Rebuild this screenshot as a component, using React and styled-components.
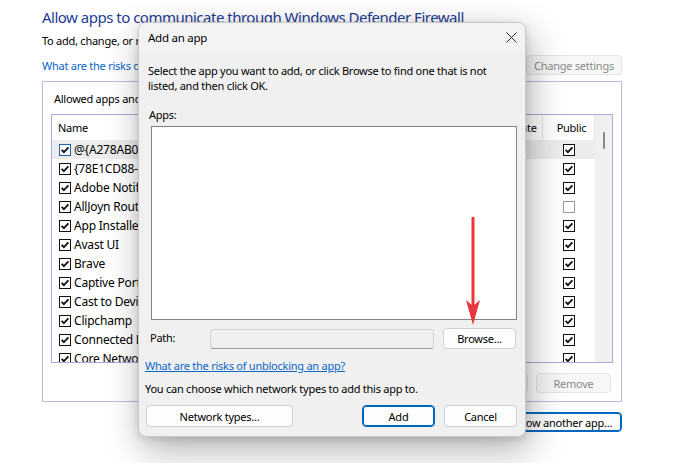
import React from 'react'
import styled, { createGlobalStyle } from 'styled-components'

const Global = createGlobalStyle`
  html, body {
    margin: 0;
    padding: 0;
    background: #ffffff;
    width: 696px;
    height: 463px;
    overflow: hidden;
  }
  body {
    font-family: 'Noto Sans', 'Open Sans', sans-serif;
    font-size: 11px;
    letter-spacing: -0.25px;
    color: #000;
  }
`

const Page = styled.div`
  position: relative;
  width: 696px;
  height: 463px;
  overflow: hidden;
  padding: 7px 0 0 42px;
  box-sizing: border-box;
`

const Main = styled.div`
  width: 580px;
  display: flex;
  flex-direction: column;
`

const Title = styled.div`
  font-size: 15px;
  letter-spacing: -0.5px;
  line-height: 20px;
  color: #1e3c96;
  white-space: nowrap;
`

const Intro = styled.div`
  margin-top: 5px;
  line-height: 18px;
  white-space: nowrap;
`

const LinkRow = styled.div`
  margin-top: 3px;
  height: 24px;
  display: flex;
  align-items: center;
  justify-content: space-between;
`

const BlueLink = styled.a`
  color: #0a66c8;
  text-decoration: ${p => (p.$underline ? 'underline' : 'none')};
  white-space: nowrap;
  cursor: pointer;
`

const Button = styled.button`
  font: inherit;
  letter-spacing: inherit;
  height: ${p => p.$h || 21}px;
  width: ${p => p.$w}px;
  padding: 0;
  margin-right: ${p => p.$mr || 0}px;
  background: ${p => (p.$disabled ? '#f7f7f7' : '#fdfdfd')};
  color: ${p => (p.$disabled ? '#8a8a8a' : '#000')};
  border: 1px solid ${p => (p.$primary ? '#0067c0' : p.$disabled ? '#e5e5e5' : '#d0d0d0')};
  border-radius: 4px;
  box-shadow: ${p => (p.$primary ? 'inset 0 0 0 1px #0067c0' : 'none')};
  white-space: nowrap;
`

const Group = styled.div`
  margin-top: 4px;
  height: 321px;
  border: 1px solid #b9bae0;
  box-sizing: border-box;
  padding: 9px 8px 0 8px;
  display: flex;
  flex-direction: column;
`

const GroupLabel = styled.div`
  line-height: 16px;
  padding-left: 3px;
  white-space: nowrap;
`

const ListBox = styled.div`
  margin-top: 7px;
  height: 249px;
  border: 1px solid #a9aadb;
  box-sizing: border-box;
  display: flex;
  overflow: hidden;
`

const Table = styled.div`
  flex: 1;
  display: flex;
  flex-direction: column;
`

const HeadRow = styled.div`
  height: 25px;
  display: grid;
  grid-template-columns: 1fr 52px 52px;
  align-items: center;
  flex-shrink: 0;
`

const HeadCell = styled.div`
  padding-left: 6px;
  height: 100%;
  display: flex;
  align-items: center;
  justify-content: ${p => (p.$center ? 'center' : 'flex-start')};
  border-right: ${p => (p.$sep ? '1px solid #e3e3e3' : 'none')};
  white-space: nowrap;
`

const Row = styled.div`
  height: 19px;
  display: grid;
  grid-template-columns: 1fr 52px 52px;
  align-items: center;
  background: ${p => (p.$selected ? '#ececec' : 'transparent')};
  flex-shrink: 0;
`

const NameCell = styled.div`
  display: flex;
  align-items: center;
  gap: 3px;
  padding-left: 7px;
  white-space: nowrap;
  font-size: 12px;
  letter-spacing: -0.2px;
`

const CenterCell = styled.div`
  display: flex;
  justify-content: center;
`

const Scroll = styled.div`
  width: 17px;
  background: #f0f0f0;
  display: flex;
  justify-content: center;
  padding-top: 17px;
  box-sizing: border-box;
`

const Thumb = styled.div`
  width: 2px;
  height: 17px;
  background: #8a8a8a;
  border-radius: 1px;
`

const GroupButtons = styled.div`
  margin-top: 10px;
  display: flex;
  justify-content: flex-end;
  gap: 8px;
  padding-right: 2px;
`

const BottomRow = styled.div`
  margin-top: 10px;
  display: flex;
  justify-content: flex-end;
`

const Dialog = styled.div`
  position: absolute;
  left: 138px;
  top: 22px;
  width: 388px;
  height: 415px;
  background: #f0f0f0;
  border: 1px solid #c8c8c8;
  box-sizing: border-box;
  border-radius: 8px;
  box-shadow: 4px 12px 36px rgba(0, 0, 0, 0.32), 0 2px 8px rgba(0, 0, 0, 0.12);
  display: flex;
  flex-direction: column;
  overflow: hidden;
`

const TitleBar = styled.div`
  height: 29px;
  background: #f3f3f3;
  display: flex;
  align-items: center;
  justify-content: space-between;
  padding: 0 8px 0 9px;
  flex-shrink: 0;
  font-size: 11.5px;
`

const DialogBody = styled.div`
  padding: 10px 9px 0 9px;
  display: flex;
  flex-direction: column;
`

const Text = styled.div`
  line-height: 15px;
  margin-top: ${p => p.$mt || 0}px;
  margin-left: ${p => p.$ml || 0}px;
  white-space: nowrap;
`

const AppsList = styled.div`
  margin: 4px 0 0 3px;
  width: 366px;
  height: 194px;
  background: #fff;
  border: 1px solid #848484;
  box-sizing: border-box;
`

const PathRow = styled.div`
  margin-top: 8px;
  display: flex;
  align-items: center;
  padding-left: 2px;
`

const PathLabel = styled.div`
  width: 60px;
  margin-top: -2px;
`

const PathInput = styled.div`
  width: 224px;
  height: 20px;
  box-sizing: border-box;
  background: #efefef;
  border: 1px solid #d4d4d4;
  border-bottom-color: #9a9a9a;
  border-radius: 3px;
  margin-right: 9px;
`

const DialogButtons = styled.div`
  margin: 9px 0 0 -2px;
  display: flex;
  align-items: center;
`

const Spacer = styled.div`
  flex: 1;
`

const ArrowLayer = styled.svg`
  position: absolute;
  left: 463px;
  top: 214px;
  overflow: visible;
`

function Check({ on = true, focus }) {
  return (
    <svg width="12" height="12" viewBox="0 0 12 12">
      <rect
        x="0.5"
        y="0.5"
        width="11"
        height="11"
        fill="#fff"
        stroke={focus ? '#1f5fb0' : on ? '#111' : '#9a9a9a'}
      />
      {on && (
        <path d="M2.6 5.8 L4.9 8.2 L9.4 3.4" fill="none" stroke="#111" strokeWidth="1.8" />
      )}
    </svg>
  )
}

const apps = [
  ['@{A278AB0D-A9B6-4B4E-9EE3-4E6C1BAF1E23}', true],
  ['{78E1CD88-49E3-476E-B926-580E596AD309}', true],
  ['Adobe Notification Client', true],
  ['AllJoyn Router', false],
  ['App Installer', true],
  ['Avast UI', true],
  ['Brave', true],
  ['Captive Portal Flow', true],
  ['Cast to Device functionality', true],
  ['Clipchamp', true],
  ['Connected Devices Platform', true],
  ['Core Networking', true],
]

export default function App() {
  return (
    <Page>
      <Global />
      <Main>
        <Title>Allow apps to communicate through Windows Defender Firewall</Title>
        <Intro>To add, change, or remove allowed apps and ports, click Change settings.</Intro>
        <LinkRow>
          <BlueLink>What are the risks of allowing an app to communicate?</BlueLink>
          <Button $w={96} $h={20} $disabled>Change settings</Button>
        </LinkRow>
        <Group>
          <GroupLabel>Allowed apps and features:</GroupLabel>
          <ListBox>
            <Table>
              <HeadRow>
                <HeadCell $sep>Name</HeadCell>
                <HeadCell $sep $center>Private</HeadCell>
                <HeadCell $sep $center>Public</HeadCell>
              </HeadRow>
              {apps.map(([name, pub], i) => (
                <Row key={name} $selected={i === 0}>
                  <NameCell>
                    <Check focus={i === 0} />
                    {name}
                  </NameCell>
                  <CenterCell>
                    <Check />
                  </CenterCell>
                  <CenterCell>
                    <Check on={pub} />
                  </CenterCell>
                </Row>
              ))}
            </Table>
            <Scroll>
              <Thumb />
            </Scroll>
          </ListBox>
          <GroupButtons>
            <Button $w={75} $h={20} $disabled>Details...</Button>
            <Button $w={75} $h={20} $disabled>Remove</Button>
          </GroupButtons>
        </Group>
        <BottomRow>
          <Button $w={118} $h={20} $primary>Allow another app...</Button>
        </BottomRow>
      </Main>

      <Dialog>
        <TitleBar>
          <span>Add an app</span>
          <svg width="11" height="11" viewBox="0 0 11 11">
            <path d="M0.5 0.5 L10.5 10.5 M10.5 0.5 L0.5 10.5" stroke="#222" strokeWidth="1" />
          </svg>
        </TitleBar>
        <DialogBody>
          <Text $mt={1}>Select the app you want to add, or click Browse to find one that is not</Text>
          <Text>listed, and then click OK.</Text>
          <Text $mt={14} $ml={1}>Apps:</Text>
          <AppsList />
          <PathRow>
            <PathLabel>Path:</PathLabel>
            <PathInput />
            <Button $w={73} $h={21}>Browse...</Button>
          </PathRow>
          <Text $mt={9} $ml={-3}>
            <BlueLink $underline>What are the risks of unblocking an app?</BlueLink>
          </Text>
          <Text $mt={8} $ml={-3}>
            You can choose which network types to add this app to.
          </Text>
          <DialogButtons>
            <Button $w={147} $h={22}>Network types...</Button>
            <Spacer />
            <Button $w={73} $h={22} $primary $mr={9}>Add</Button>
            <Button $w={73} $h={22} $mr={-1}>Cancel</Button>
          </DialogButtons>
        </DialogBody>
      </Dialog>

      <ArrowLayer width="20" height="112" viewBox="0 0 20 112">
        <line x1="10" y1="3" x2="10" y2="92" stroke="#e8383d" strokeWidth="3" />
        <path d="M3 86 L10 92 L17 86 L10 111 Z" fill="#e8383d" />
      </ArrowLayer>
    </Page>
  )
}
